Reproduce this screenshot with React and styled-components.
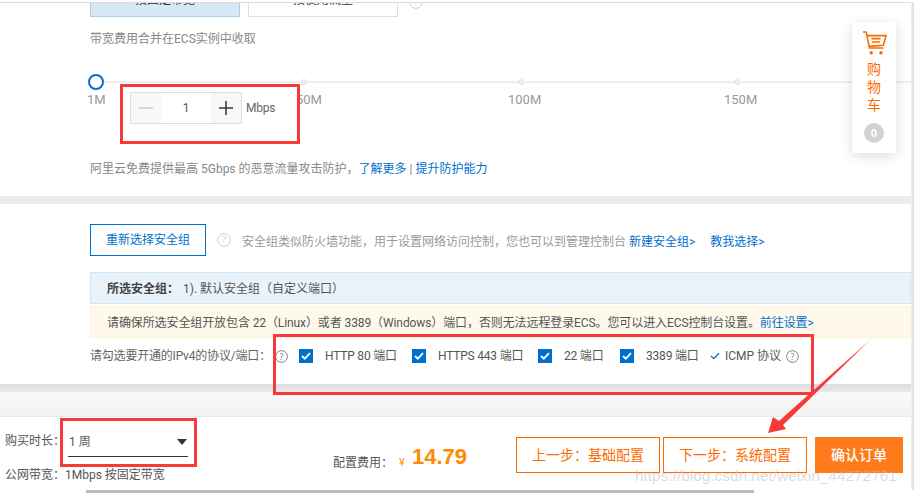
import React from "react";
import styled, { createGlobalStyle } from "styled-components";

const Global = createGlobalStyle`
  html, body { margin: 0; padding: 0; background: #fff; overflow: hidden; }
  * { box-sizing: border-box; }
`;

const FONT = `Roboto, "Noto Sans CJK SC", sans-serif`;

const Page = styled.div`
  position: relative; width: 914px; height: 493px; overflow: hidden; background: #fff;
  font: 12px/16px ${FONT}; color: #666;
`;
const Top = styled.section`
  height: 196px; padding-left: 90px; position: relative; overflow: hidden;
  border-top: 1px solid transparent;
`;
const TopRule = styled.div`
  height: 1px; margin: 1px 0 0 -90px; background: #dcdcdc;
`;
const Tabs = styled.div`
  display: flex; gap: 8px; align-items: flex-end; height: 14px; overflow: hidden;
`;
const Tab = styled.div`
  width: 150px; height: 40px; flex: none; text-align: center; line-height: 45px; font-size: 12px; color: #333;
  background: ${p => (p.$on ? "#d7e8f5" : "#fff")};
  border: 1px solid ${p => (p.$on ? "#a9cfea" : "#ddd")};
`;
const TabHelp = styled.span`
  display: flex; margin: 0 0 8px 3px;
`;
const Note = styled.p`
  margin: 14px 0 0; color: #888; font-size: 12px; line-height: 16px;
`;
const Slider = styled.div`
  position: relative; height: 2px; margin: 34px -90px 0 6px; background: #eeeeee;
`;
const Knob = styled.span`
  position: absolute; left: -8px; top: -7px; width: 16px; height: 16px; border-radius: 50%;
  background: #fff; border: 2px solid #0070cc;
`;
const Tick = styled.span`
  position: absolute; top: -2px; width: 6px; height: 6px; border-radius: 50%;
  background: #fff; border: 2px solid #e8e8e8; left: ${p => p.$x}px;
`;
const Marks = styled.div`
  display: flex; margin: 9px 0 0 -3px; font-size: 13px; line-height: 16px; color: #999;
`;
const Mark = styled.span`
  width: ${p => p.$w}px; flex: none;
`;
const StepRow = styled.div`
  display: flex; align-items: center; gap: 4px; margin: -16px 0 0 40px; position: relative;
`;
const Stepper = styled.div`
  display: flex; width: 112px; height: 32px; border: 1px solid #ddd; background: #fff;
`;
const StepBtn = styled.div`
  width: 30px; background: #f7f8fa; display: flex; align-items: center; justify-content: center;
  color: ${p => (p.$off ? "#ccc" : "#333")};
`;
const StepValue = styled.div`
  flex: 1; text-align: center; line-height: 30px; font-size: 12px; color: #555;
`;
const Unit = styled.span`
  font-size: 12px; color: #666; letter-spacing: -0.2px;
`;
const Protect = styled.p`
  margin: 37px 0 0; color: #888; font-size: 12px; line-height: 16px;
`;
const Link = styled.a`
  color: #0070cc;
`;
const Band = styled.div`
  height: 8px; background: ${p => p.$bg};
`;
const Group = styled.section`
  height: 180px; padding: 20px 3px 0 90px; background: #fff;
`;
const ChooseRow = styled.div`
  display: flex; align-items: center; height: 32px;
`;
const Outline = styled.div`
  width: 116px; height: 32px; border: 1px solid #0070cc; color: #0070cc; text-align: center;
  line-height: 30px; font-size: 12px; flex: none;
`;
const HelpGap = styled.span`
  width: ${p => p.$w}px; flex: none;
`;
const Hint = styled.span`
  margin-left: 11px; color: #999; white-space: nowrap; font-size: 12px; position: relative; top: 2px;
`;
const GapLink = styled(Link)`
  margin-left: 15px;
`;
const Info = styled.div`
  height: 32px; margin-top: ${p => p.$mt}px; padding-left: 16px; line-height: 33px; white-space: nowrap;
  background: ${p => p.$bg}; border: 1px solid ${p => p.$line}; color: #555;
  letter-spacing: ${p => p.$track || 0}px;
`;
const Strong = styled.b`
  color: #444; margin-right: 4px; font-weight: 700;
`;
const PortRow = styled.div`
  display: flex; align-items: center; height: 18px; margin-top: 9px; white-space: nowrap;
`;
const PortLabel = styled.span`
  color: #666; width: 185px; flex: none; letter-spacing: -0.2px;
`;
const Box = styled.span`
  width: 14px; height: 14px; background: #0070cc; display: flex; align-items: center; justify-content: center; flex: none;
`;
const Port = styled.div`
  display: flex; align-items: center; width: ${p => p.$w}px; flex: none; gap: 12px; color: #555; letter-spacing: -0.2px;
`;
const Icmp = styled.div`
  display: flex; align-items: center; gap: 5px; color: #555;
`;
const Shade = styled.div`
  height: 25px; background: linear-gradient(#fafafa, #f1f1f2); border-bottom: 1px solid #eaeaea;
`;
const Footer = styled.footer`
  height: 73px; display: flex; background: #fff; position: relative;
`;
const Left = styled.div`
  width: 333px; flex: none; padding: 16px 0 0 5px; color: #555;
`;
const Duration = styled.div`
  display: flex; align-items: flex-start; height: 29px;
`;
const Select = styled.div`
  width: 120px; height: 24px; margin-left: 3px; padding: 0 1px 6px; border-bottom: 1px solid #333;
  display: flex; justify-content: space-between; align-items: center;
`;
const Caret = styled.span`
  width: 0; height: 0; border: 5px solid transparent; border-top: 6px solid #333; border-bottom: 0;
`;
const SubLine = styled.div`
  margin-top: 5px;
`;
const Price = styled.div`
  width: 183px; flex: none; display: flex; align-items: baseline; padding-top: 27px; white-space: nowrap;
`;
const PriceLabel = styled.span`
  width: 66px; color: #555; position: relative; top: 3px;
`;
const Yen = styled.span`
  color: #ff8a00; width: 13px; font-size: 11px; position: relative; top: 2px;
`;
const Amount = styled.span`
  color: #ff8a00; font: 700 22px/26px "Liberation Sans", sans-serif;
`;
const Actions = styled.div`
  display: flex; padding-top: 20px; height: 56px;
`;
const Step = styled.div`
  width: 144px; height: 36px; margin-right: ${p => p.$mr}px; border: 1px solid #ff6a00; color: #ff6a00;
  text-align: center; line-height: 34px; font-size: 14px;
`;
const Confirm = styled.div`
  width: 88px; height: 36px; background: #ff7a1a; color: #fff; text-align: center;
  line-height: 36px; font-size: 14px; font-weight: 500;
`;
const Scroll = styled.div`
  height: 3px; background: #fff;
`;
const Thumb = styled.div`
  margin-left: 86px; width: 668px; height: 3px; background: #bdbdbd;
`;
const Edge = styled.div`
  position: absolute; right: 0; top: 2px; bottom: 3px; width: 3px;
  background: linear-gradient(to right, #f3f3f3, #d9d9d9);
`;
const Cart = styled.aside`
  position: absolute; left: 852px; top: 22px; width: 44px; height: 131px; background: #fff;
  box-shadow: 0 3px 12px rgba(0,0,0,.14); display: flex; flex-direction: column; align-items: center; padding-top: 9px;
`;
const CartText = styled.div`
  margin-top: 4px; width: 14px; font-size: 14px; line-height: 18px; color: #ff6a00; text-align: center;
`;
const Zero = styled.span`
  margin-top: 9px; width: 20px; height: 20px; border-radius: 50%; background: #d3d3d3; color: #fff;
  font: 700 11px/20px "Open Sans", sans-serif; text-align: center;
`;
const Mark2 = styled.div`
  position: absolute; border: 3px solid #f63a3a; pointer-events: none;
  left: ${p => p.$x}px; top: ${p => p.$y}px; width: ${p => p.$w}px; height: ${p => p.$h}px;
`;
const Arrow = styled.svg`
  position: absolute; left: 760px; top: 335px;
`;
const Water = styled.div`
  position: absolute; left: 635px; top: 466px; font: 15.4px/20px "Liberation Sans", sans-serif;
  color: rgba(190,190,190,.55); white-space: nowrap;
`;
const HelpSvg = styled.svg`
  flex: none;
`;

const Help = ({ size = 14, color = "#777" }) => (
  <HelpSvg width={size} height={size} viewBox="0 0 14 14" fill="none">
    <circle cx="7" cy="7" r="6.3" stroke={color} />
    <text x="7" y="10.3" textAnchor="middle" fontSize="9.5" fontFamily="Open Sans" fill={color}>?</text>
  </HelpSvg>
);

const Check = () => (
  <svg width="10" height="8" viewBox="0 0 10 8" fill="none">
    <path d="M1 4l2.8 2.7L9 1.2" stroke="#fff" strokeWidth="1.8" />
  </svg>
);

const Line = ({ v }) => (
  <svg width="16" height="16" viewBox="0 0 16 16" fill="none">
    <path d="M1 8h14" stroke="currentColor" strokeWidth="1.5" />
    {v && <path d="M8 1v14" stroke="currentColor" strokeWidth="1.5" />}
  </svg>
);

const CartIcon = () => (
  <svg width="25" height="25" viewBox="0 0 25 25" fill="none" stroke="#ff6a00" strokeWidth="1.6">
    <path d="M1 1h3.2L7.4 17h14" />
    <path d="M5 4.6h19l-2.6 9.6L7 15.4" />
    <path d="M9.5 7.6h9M10 11h8" />
    <circle cx="9.2" cy="21.8" r="1.7" fill="#ff6a00" stroke="none" />
    <circle cx="19" cy="21.8" r="1.7" fill="#ff6a00" stroke="none" />
  </svg>
);

const ports = [
  ["HTTP 80 端口", 113],
  ["HTTPS 443 端口", 126],
  ["22 端口", 82],
  ["3389 端口", 90],
];

export default function App() {
  return (
    <Page>
      <Global />
      <Top>
        <TopRule />
        <Tabs>
          <Tab $on>按固定带宽</Tab>
          <Tab>按使用流量</Tab>
          <TabHelp><Help size={14} color="#ccc" /></TabHelp>
        </Tabs>
        <Note>带宽费用合并在ECS实例中收取</Note>
        <Slider>
          <Knob />
          <Tick $x={205} />
          <Tick $x={422} />
          <Tick $x={638} />
        </Slider>
        <Marks>
          <Mark $w={209}>1M</Mark>
          <Mark $w={212}>50M</Mark>
          <Mark $w={216}>100M</Mark>
          <Mark $w={100}>150M</Mark>
        </Marks>
        <StepRow>
          <Stepper>
            <StepBtn $off><Line /></StepBtn>
            <StepValue>1</StepValue>
            <StepBtn><Line v /></StepBtn>
          </Stepper>
          <Unit>Mbps</Unit>
        </StepRow>
        <Protect>
          阿里云免费提供最高 5Gbps 的恶意流量攻击防护，<Link>了解更多</Link> | <Link>提升防护能力</Link>
        </Protect>
      </Top>
      <Band $bg="#ebebef" />
      <Group>
        <ChooseRow>
          <Outline>重新选择安全组</Outline>
          <HelpGap $w={11} />
          <Help size={14} color="#ccc" />
          <Hint>
            安全组类似防火墙功能，用于设置网络访问控制，您也可以到管理控制台 <Link>新建安全组&gt;</Link>
            <GapLink>教我选择&gt;</GapLink>
          </Hint>
        </ChooseRow>
        <Info $mt={16} $bg="#eaf2fa" $line="#d3e5f4">
          <Strong>所选安全组：</Strong>1). 默认安全组（自定义端口）
        </Info>
        <Info $mt={2} $bg="#fff9ec" $line="#fdf2d8" $track={-0.1}>
          请确保所选安全组开放包含 22（Linux）或者 3389（Windows）端口，否则无法远程登录ECS。您可以进入ECS控制台设置。<Link>前往设置&gt;</Link>
        </Info>
        <PortRow>
          <PortLabel>请勾选要开通的IPv4的协议/端口：</PortLabel>
          <Help size={13} />
          <HelpGap $w={11} />
          {ports.map(([t, w]) => (
            <Port key={t} $w={w}>
              <Box><Check /></Box>
              {t}
            </Port>
          ))}
          <Icmp>
            <svg width="10" height="8" viewBox="0 0 10 8" fill="none">
              <path d="M1 4l2.8 2.7L9 1.2" stroke="#0070cc" strokeWidth="1.3" />
            </svg>
            ICMP 协议
            <Help size={13} />
          </Icmp>
        </PortRow>
      </Group>
      <Band $bg="linear-gradient(#dcdde1, #e9e9eb)" />
      <Shade />
      <Footer>
        <Left>
          <Duration>
            购买时长：
            <Select>1 周<Caret /></Select>
          </Duration>
          <SubLine>公网带宽：1Mbps 按固定带宽</SubLine>
        </Left>
        <Price>
          <PriceLabel>配置费用：</PriceLabel>
          <Yen>¥</Yen>
          <Amount>14.79</Amount>
        </Price>
        <Actions>
          <Step $mr={3}>上一步：基础配置</Step>
          <Step $mr={8}>下一步：系统配置</Step>
          <Confirm>确认订单</Confirm>
        </Actions>
      </Footer>
      <Scroll><Thumb /></Scroll>
      <Edge />
      <Cart>
        <CartIcon />
        <CartText>购物车</CartText>
        <Zero>0</Zero>
      </Cart>
      <Mark2 $x={120} $y={84} $w={180} $h={60} />
      <Mark2 $x={273} $y={334} $w={541} $h={61} />
      <Mark2 $x={60} $y={418} $w={137} $h={49} />
      <Arrow width="116" height="104" viewBox="0 0 116 104">
        <path d="M110 5L23 90l3 4-18 4 5-16 6 4z" fill="#f63a3a" />
      </Arrow>
      <Water>https://blog.csdn.net/weixin_44272761</Water>
    </Page>
  );
}
